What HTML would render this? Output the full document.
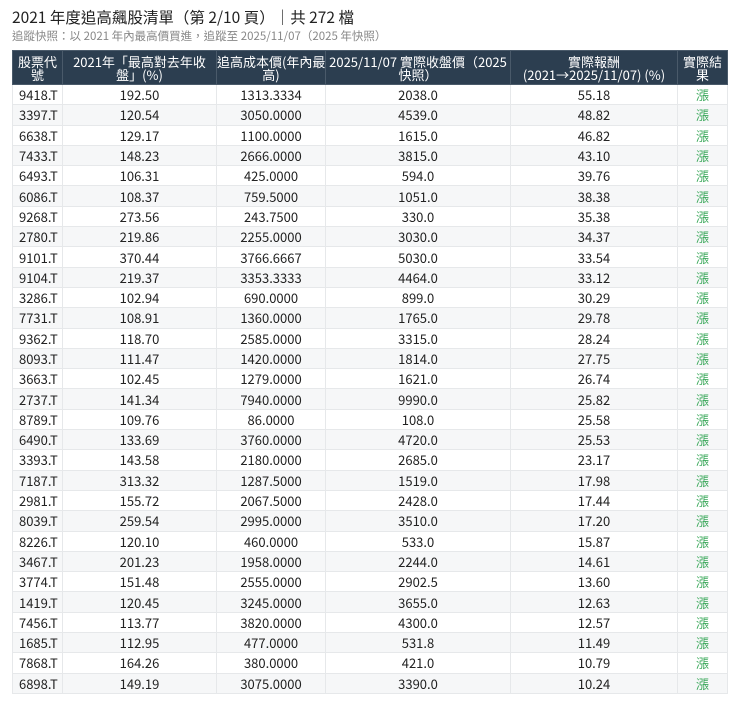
<!DOCTYPE html>
<html><head><meta charset="utf-8"><style>
body{margin:0;background:#fff;font-family:"Noto Sans CJK TC","Liberation Sans",sans-serif;color:#222;}
.t1{position:absolute;left:12px;top:6px;font-size:15.5px;line-height:22px;color:#222;}
.t2{position:absolute;left:12px;top:28px;font-size:11.5px;line-height:16px;color:#888;}
table{position:absolute;left:12px;top:50px;border-collapse:collapse;table-layout:fixed;width:715px;font-size:13px;}
th{background:#2c3e50;color:#fff;font-weight:normal;height:33px;line-height:13px;padding:0;border:1px solid #4a5a6a;font-size:13px;white-space:nowrap;overflow:hidden;}
td{height:19.3px;padding:0;text-align:center;border:1px solid #e6e8ea;line-height:19px;}
td:first-child{text-align:left;padding-left:6px;}
tr:nth-child(even) td{background:#f6f7f8;}
td.u{color:#3aa85a;}
</style></head><body>
<div class="t1">2021 年度追高飆股清單（第 2/10 頁）｜共 272 檔</div>
<div class="t2">追蹤快照：以 2021 年內最高價買進，追蹤至 2025/11/07（2025 年快照）</div>
<table>
<colgroup><col style="width:50px"><col style="width:154px"><col style="width:109px"><col style="width:185px"><col style="width:167px"><col style="width:50px"></colgroup>
<thead><tr><th>股票代<br>號</th><th>2021年「最高對去年收<br>盤」(%)</th><th>追高成本價(年內最<br>高)</th><th>2025/11/07 實際收盤價（2025<br>快照）</th><th>實際報酬<br>(2021→2025/11/07) (%)</th><th>實際結<br>果</th></tr></thead>
<tbody>
<tr><td>9418.T</td><td>192.50</td><td>1313.3334</td><td>2038.0</td><td>55.18</td><td class="u">漲</td></tr>
<tr><td>3397.T</td><td>120.54</td><td>3050.0000</td><td>4539.0</td><td>48.82</td><td class="u">漲</td></tr>
<tr><td>6638.T</td><td>129.17</td><td>1100.0000</td><td>1615.0</td><td>46.82</td><td class="u">漲</td></tr>
<tr><td>7433.T</td><td>148.23</td><td>2666.0000</td><td>3815.0</td><td>43.10</td><td class="u">漲</td></tr>
<tr><td>6493.T</td><td>106.31</td><td>425.0000</td><td>594.0</td><td>39.76</td><td class="u">漲</td></tr>
<tr><td>6086.T</td><td>108.37</td><td>759.5000</td><td>1051.0</td><td>38.38</td><td class="u">漲</td></tr>
<tr><td>9268.T</td><td>273.56</td><td>243.7500</td><td>330.0</td><td>35.38</td><td class="u">漲</td></tr>
<tr><td>2780.T</td><td>219.86</td><td>2255.0000</td><td>3030.0</td><td>34.37</td><td class="u">漲</td></tr>
<tr><td>9101.T</td><td>370.44</td><td>3766.6667</td><td>5030.0</td><td>33.54</td><td class="u">漲</td></tr>
<tr><td>9104.T</td><td>219.37</td><td>3353.3333</td><td>4464.0</td><td>33.12</td><td class="u">漲</td></tr>
<tr><td>3286.T</td><td>102.94</td><td>690.0000</td><td>899.0</td><td>30.29</td><td class="u">漲</td></tr>
<tr><td>7731.T</td><td>108.91</td><td>1360.0000</td><td>1765.0</td><td>29.78</td><td class="u">漲</td></tr>
<tr><td>9362.T</td><td>118.70</td><td>2585.0000</td><td>3315.0</td><td>28.24</td><td class="u">漲</td></tr>
<tr><td>8093.T</td><td>111.47</td><td>1420.0000</td><td>1814.0</td><td>27.75</td><td class="u">漲</td></tr>
<tr><td>3663.T</td><td>102.45</td><td>1279.0000</td><td>1621.0</td><td>26.74</td><td class="u">漲</td></tr>
<tr><td>2737.T</td><td>141.34</td><td>7940.0000</td><td>9990.0</td><td>25.82</td><td class="u">漲</td></tr>
<tr><td>8789.T</td><td>109.76</td><td>86.0000</td><td>108.0</td><td>25.58</td><td class="u">漲</td></tr>
<tr><td>6490.T</td><td>133.69</td><td>3760.0000</td><td>4720.0</td><td>25.53</td><td class="u">漲</td></tr>
<tr><td>3393.T</td><td>143.58</td><td>2180.0000</td><td>2685.0</td><td>23.17</td><td class="u">漲</td></tr>
<tr><td>7187.T</td><td>313.32</td><td>1287.5000</td><td>1519.0</td><td>17.98</td><td class="u">漲</td></tr>
<tr><td>2981.T</td><td>155.72</td><td>2067.5000</td><td>2428.0</td><td>17.44</td><td class="u">漲</td></tr>
<tr><td>8039.T</td><td>259.54</td><td>2995.0000</td><td>3510.0</td><td>17.20</td><td class="u">漲</td></tr>
<tr><td>8226.T</td><td>120.10</td><td>460.0000</td><td>533.0</td><td>15.87</td><td class="u">漲</td></tr>
<tr><td>3467.T</td><td>201.23</td><td>1958.0000</td><td>2244.0</td><td>14.61</td><td class="u">漲</td></tr>
<tr><td>3774.T</td><td>151.48</td><td>2555.0000</td><td>2902.5</td><td>13.60</td><td class="u">漲</td></tr>
<tr><td>1419.T</td><td>120.45</td><td>3245.0000</td><td>3655.0</td><td>12.63</td><td class="u">漲</td></tr>
<tr><td>7456.T</td><td>113.77</td><td>3820.0000</td><td>4300.0</td><td>12.57</td><td class="u">漲</td></tr>
<tr><td>1685.T</td><td>112.95</td><td>477.0000</td><td>531.8</td><td>11.49</td><td class="u">漲</td></tr>
<tr><td>7868.T</td><td>164.26</td><td>380.0000</td><td>421.0</td><td>10.79</td><td class="u">漲</td></tr>
<tr><td>6898.T</td><td>149.19</td><td>3075.0000</td><td>3390.0</td><td>10.24</td><td class="u">漲</td></tr>
</tbody></table>
</body></html>
